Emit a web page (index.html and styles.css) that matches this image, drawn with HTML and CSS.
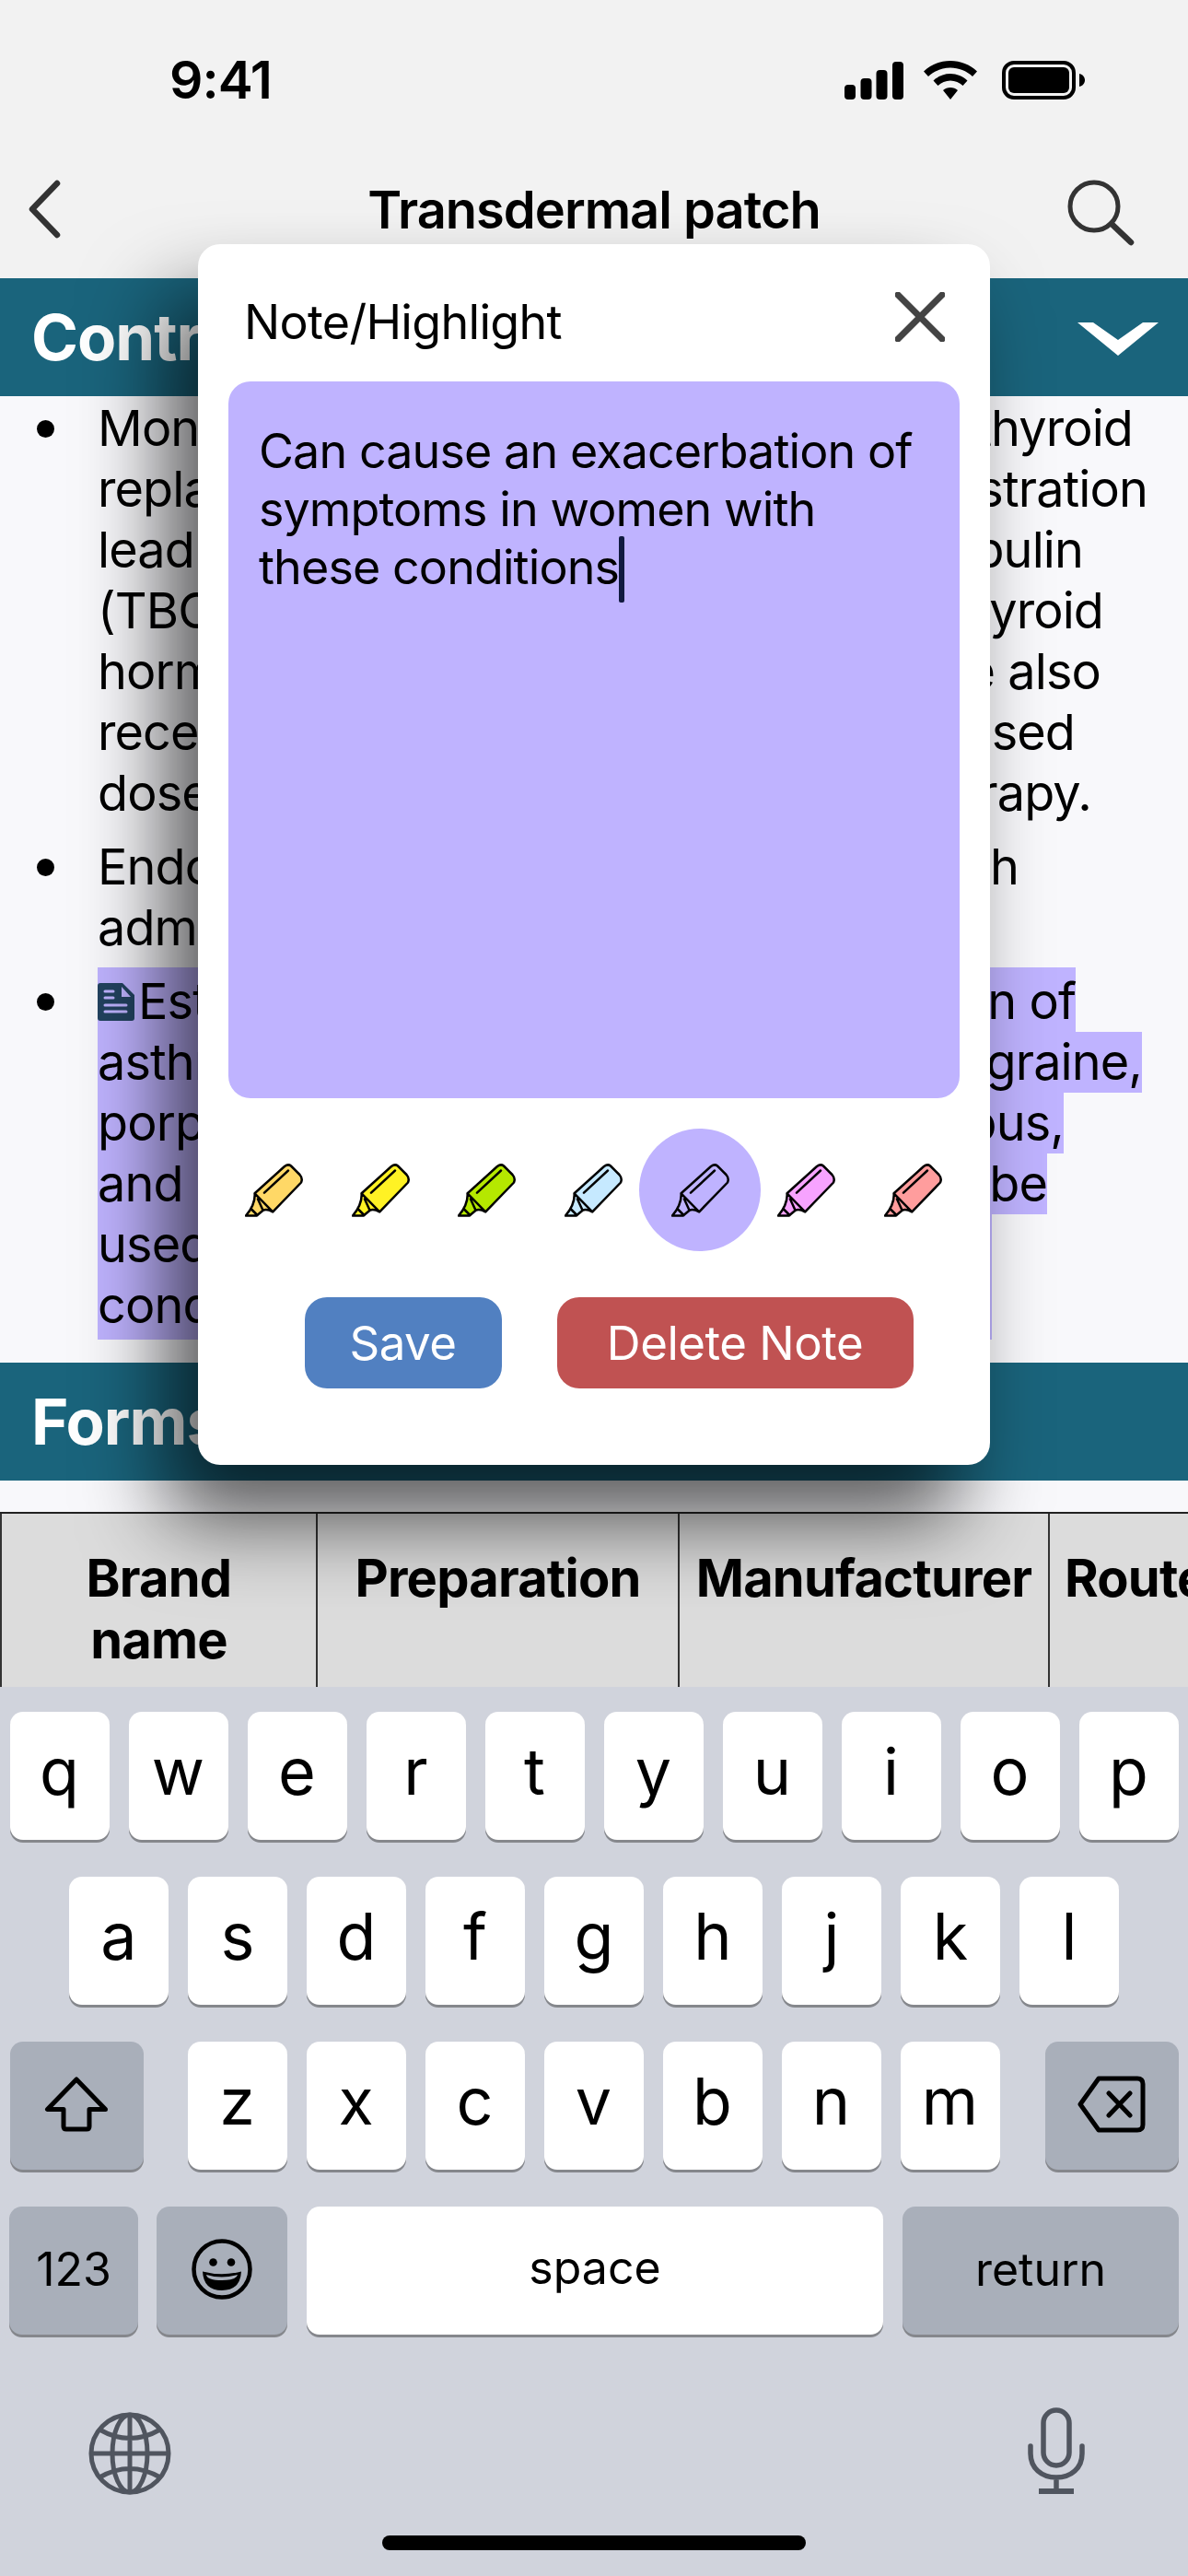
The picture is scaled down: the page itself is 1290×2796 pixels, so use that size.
FILE: index.html
```html
<!DOCTYPE html>
<html lang="en">
<head>
    <meta charset="UTF-8">
    <meta name="viewport" content="width=device-width, initial-scale=1.0">
    <title>Transdermal patch</title>
    <link rel="stylesheet" href="styles.css">
</head>
<body>
    <svg class="defs" width="0" height="0">
        <symbol id="pen" viewBox="0 0 64 58">
            <path class="pen-fill" d="M10.6 32.3 42 2.5Q46 -1 50 2L60 12Q63.5 16 61.5 20L30.2 52.3Q24 49 19.6 50.7L12.7 56.7H1Q10.6 45 10.6 32.3Z" transform="translate(0 0)"/>
            <path class="pen-line" d="M10.6 32.3 43 3Q47 0 50 2.5L59.5 12Q63 16 61 20.5L30.2 52.3 10.6 32.3Q11.5 44 1 56.5H12.7L19.6 50.7Q24 49 30.2 52.3M21 31.7 47 7.5M7 49.5 13.5 56M14 38.5 19.6 50.7"/>
        </symbol>
    </svg>

    <div class="status-bar">
        <span class="time">9:41</span>
        <div class="status-icons">
            <svg width="64" height="42" viewBox="0 0 64 42"><rect x="0" y="26" width="12" height="16" rx="4"/><rect x="17.500" y="19" width="12" height="23" rx="4"/><rect x="34.500" y="10" width="12" height="32" rx="4"/><rect x="52" y="1" width="12" height="41" rx="4"/></svg>
            <svg width="58" height="42" viewBox="0 0 58 42"><path d="M29 0C18 0 8 4 0 11.500L5 17C11.500 11 20 7.500 29 7.500S46.500 11 53 17L58 11.500C50 4 40 0 29 0ZM29 14C22 14 15.500 16.800 10.500 21.500L15.500 27C19 23.600 24 21.500 29 21.500S39 23.600 42.500 27L47.500 21.500C42.500 16.800 36 14 29 14ZM29 29C26 29 23 30.200 21 32L29 42 37 32C35 30.200 32 29 29 29Z"/></svg>
            <svg class="battery" width="90" height="42" viewBox="0 0 90 42"><rect x="2" y="2" width="76" height="38" rx="11" fill="none" stroke="#000" stroke-width="4"/><rect x="7" y="7" width="66" height="28" rx="6"/><path d="M84 14C88 15 90 18 90 21S88 27 84 28Z"/></svg>
        </div>
    </div>

    <div class="nav-bar">
        <svg class="nav-back" width="36" height="64" viewBox="0 0 36 64"><path d="M32 4 5 32 32 60" fill="none" stroke="#333" stroke-width="6.500" stroke-linecap="round" stroke-linejoin="round"/></svg>
        <span class="nav-title">Transdermal patch</span>
        <svg class="nav-search" width="74" height="72" viewBox="0 0 74 72"><circle cx="30" cy="29" r="26" fill="none" stroke="#333" stroke-width="5"/><path d="M49 48 70 68" stroke="#333" stroke-width="6.500" stroke-linecap="round"/></svg>
    </div>

    <div class="section-bar">
        <span>Contraindications</span>
        <svg class="chevron" width="88" height="40" viewBox="0 0 88 40"><path d="M0 3H17L44 22 71 3H88L44 39Z" fill="#fff"/></svg>
    </div>

    <ul class="notes">
        <li>
            <div class="ln end-1230"><span>Monitor</span><span>thyroid</span></div>
            <div class="ln end-1246"><span>replacement</span><span>administration</span></div>
            <div class="ln end-1176"><span>lead to</span><span>globulin</span></div>
            <div class="ln end-1198"><span>(TBG)</span><span>thyroid</span></div>
            <div class="ln end-1195"><span>hormone</span><span>be also</span></div>
            <div class="ln end-1167"><span>receive</span><span>increased</span></div>
            <div class="ln end-1185"><span>doses</span><span>therapy.</span></div>
        </li>
        <li>
            <div class="ln end-1106"><span>Endometrial</span><span>with</span></div>
            <div class="ln"><span>administration</span></div>
        </li>
        <li class="marked">
            <div class="ln end-1168 first"><span class="with-note"><svg class="note-icon" width="40" height="41" viewBox="0 0 40 41"><path d="M3 0H27L40 13V38Q40 41 37 41H3Q0 41 0 38V3Q0 0 3 0Z" fill="#22425f"/><path d="M26 4 36 15H26Z" fill="#bfb3ff"/><path d="M8 9H17M8 16H17M8 24H31M8 31H31" stroke="#bfb3ff" stroke-width="3" stroke-linecap="round"/></svg>Estrogens</span><span>function of</span></div>
            <div class="ln end-1240"><span>asthma</span><span>migraine,</span></div>
            <div class="ln end-1155"><span>porphyria</span><span>lupus,</span></div>
            <div class="ln end-1137"><span>and</span><span>be</span></div>
            <div class="ln end-1077"><span>used</span></div>
            <div class="ln end-1077 last"><span>conditions</span></div>
        </li>
    </ul>

    <div class="section-bar">
        <span>Forms</span>
    </div>
    <div class="spacer"></div>

    <div class="table-wrap">
        <table>
            <tr>
                <th class="col-brand">Brand name</th>
                <th class="col-prep">Preparation</th>
                <th class="col-manu">Manufacturer</th>
                <th class="col-route">Route</th>
            </tr>
        </table>
    </div>

    <div class="keyboard">
        <div class="key-row">
            <div class="key">q</div><div class="key">w</div><div class="key">e</div><div class="key">r</div><div class="key">t</div><div class="key">y</div><div class="key">u</div><div class="key">i</div><div class="key">o</div><div class="key">p</div>
        </div>
        <div class="key-row">
            <div class="key">a</div><div class="key">s</div><div class="key">d</div><div class="key">f</div><div class="key">g</div><div class="key">h</div><div class="key">j</div><div class="key">k</div><div class="key">l</div>
        </div>
        <div class="key-row wide-ends">
            <div class="key dark shift">
                <svg width="70" height="60" viewBox="0 0 70 60"><path d="M35 3 3.500 35.500H21V54Q21 57 24 57H46Q49 57 49 54V35.500H66.500Z" fill="none" stroke="#000" stroke-width="5" stroke-linejoin="round"/></svg>
            </div>
            <div class="key">z</div><div class="key">x</div><div class="key">c</div><div class="key">v</div><div class="key">b</div><div class="key">n</div><div class="key">m</div>
            <div class="key dark shift">
                <svg width="74" height="62" viewBox="0 0 74 62"><path d="M23 3H65Q71 3 71 9V53Q71 59 65 59H23L3 31Z" fill="none" stroke="#000" stroke-width="5" stroke-linejoin="round"/><path d="M34 19 57 43M57 19 34 43" stroke="#000" stroke-width="5" stroke-linecap="round"/></svg>
            </div>
        </div>
        <div class="key-row bottom-row">
            <div class="key dark num">123</div>
            <div class="key dark emoji">
                <svg width="66" height="66" viewBox="0 0 66 66"><circle cx="33" cy="33" r="30.500" fill="none" stroke="#000" stroke-width="4.500"/><circle cx="23.500" cy="25.500" r="4.300"/><circle cx="43" cy="25.500" r="4.300"/><path d="M12 35.500Q33 41 54 35.500Q53 56 33 56T12 35.500Z"/><path d="M16 39Q33 44 50 39Q49 45 33 45T16 39Z" fill="#a9afba"/></svg>
            </div>
            <div class="key space">space</div>
            <div class="key dark return">return</div>
        </div>
        <div class="kb-tools">
            <svg width="90" height="90" viewBox="0 0 90 90" fill="none" stroke="#50555f" stroke-width="5"><circle cx="45" cy="45" r="42"/><ellipse cx="45" cy="45" rx="19" ry="42"/><path d="M45 3V87M3 45H87M12 19Q45 38 78 19M12 71Q45 52 78 71"/></svg>
            <svg class="mic" width="62" height="94" viewBox="0 0 62 94" fill="none" stroke="#50555f" stroke-width="5.500"><rect x="17" y="3" width="28" height="60" rx="14"/><path d="M3 42V50C3 66 15 76 31 76S59 66 59 50V42M31 76V91" stroke-linecap="round"/><path d="M12 91H50" stroke-width="6"/></svg>
        </div>
        <div class="home-bar"></div>
    </div>

    <div class="modal">
        <div class="modal-head">
            <span>Note/Highlight</span>
            <svg width="54" height="54" viewBox="0 0 54 54"><path d="M3 3 51 51M51 3 3 51" stroke="#444" stroke-width="7" stroke-linecap="round"/></svg>
        </div>
        <div class="note-box">Can cause an exacerbation of symptoms in women with these conditions<span class="caret"></span></div>
        <div class="pens">
            <div class="pen orange"><svg width="64" height="58"><use href="#pen"/></svg></div>
            <div class="pen yellow"><svg width="64" height="58"><use href="#pen"/></svg></div>
            <div class="pen green"><svg width="64" height="58"><use href="#pen"/></svg></div>
            <div class="pen blue"><svg width="64" height="58"><use href="#pen"/></svg></div>
            <div class="pen violet active"><svg width="64" height="58"><use href="#pen"/></svg></div>
            <div class="pen pink"><svg width="64" height="58"><use href="#pen"/></svg></div>
            <div class="pen red"><svg width="64" height="58"><use href="#pen"/></svg></div>
        </div>
        <div class="modal-actions">
            <button class="save-button">Save</button>
            <button class="delete-button">Delete Note</button>
        </div>
    </div>
</body>
</html>
```

FILE: styles.css
```css
body {
    margin: 0;
    width: 1290px;
    height: 2796px;
    overflow: hidden;
    position: relative;
    display: flex;
    flex-direction: column;
    background-color: #f8f8fb;
    color: #000;
    font-family: Inter, "Liberation Sans", sans-serif;
}
.defs {
    position: absolute;
}
.status-bar {
    height: 174px;
    box-sizing: border-box;
    background-color: #f2f2f2;
    display: flex;
    justify-content: space-between;
    padding: 66px 112px 0 184px;
}
.time {
    font-size: 57px;
    font-weight: 600;
    line-height: 42px;
    letter-spacing: -1px;
}
.status-icons {
    display: flex;
    align-items: flex-start;
    gap: 22px;
}
.battery {
    margin-left: 5px;
}
.nav-bar {
    height: 128px;
    box-sizing: border-box;
    background-color: #f2f2f2;
    display: grid;
    grid-template-columns: 1fr auto 1fr;
    align-items: start;
    padding: 21px 30px 0;
}
.nav-search {
    justify-self: end;
    margin-right: 28px;
}
.nav-title {
    font-size: 56px;
    font-weight: 600;
    line-height: 66px;
    letter-spacing: -1px;
}
.section-bar {
    height: 128px;
    flex-shrink: 0;
    box-sizing: border-box;
    background-color: #1a647c;
    color: white;
    display: flex;
    justify-content: space-between;
    align-items: center;
    padding: 0 32px 0 34px;
    font-size: 69px;
    font-weight: 700;
    letter-spacing: -1px;
}
.chevron {
    margin-top: 2px;
}
.notes {
    height: 1049px;
    flex-shrink: 0;
    box-sizing: border-box;
    margin: 0;
    padding: 2px 0 0 106px;
    list-style: none;
    font-size: 54px;
    line-height: 66px;
    letter-spacing: -0.9px;
}
.notes li {
    position: relative;
    margin-bottom: 14px;
}
.notes li.marked {
    margin-top: -4px;
}
.notes li::before {
    content: "";
    position: absolute;
    left: -66px;
    top: 24px;
    width: 19px;
    height: 19px;
    border-radius: 50%;
    background: #000;
}
.notes li.marked::before {
    top: 28px;
}
.ln {
    display: flex;
    justify-content: space-between;
    white-space: nowrap;
}
.marked .ln {
    background-color: #bfb3ff;
}
.marked .first {
    padding-top: 4px;
}
.marked .last {
    padding-bottom: 4px;
}
.with-note {
    display: inline-flex;
    align-items: center;
}
.note-icon {
    margin-right: 4px;
}
.end-1230 { margin-right: 60px; }
.end-1246 { margin-right: 44px; }
.end-1176 { margin-right: 114px; }
.end-1198 { margin-right: 92px; }
.end-1195 { margin-right: 95px; }
.end-1167 { margin-right: 123px; }
.end-1185 { margin-right: 105px; }
.end-1106 { margin-right: 184px; }
.end-1168 { margin-right: 122px; }
.end-1240 { margin-right: 50px; }
.end-1155 { margin-right: 135px; }
.end-1137 { margin-right: 153px; }
.end-1077 { margin-right: 213px; }
.spacer {
    height: 34px;
    flex-shrink: 0;
}
.table-wrap {
    height: 190px;
    flex-shrink: 0;
    overflow: hidden;
}
table {
    width: 1500px;
    table-layout: fixed;
    border-collapse: collapse;
    background-color: #dcdcdc;
}
th {
    height: 190px;
    box-sizing: border-box;
    padding: 37px 0 0 0;
    vertical-align: top;
    border-left: 2px solid #333;
    border-top: 2px solid #222;
    font-size: 56px;
    font-weight: 700;
    line-height: 67px;
    letter-spacing: -0.8px;
}
.col-brand { width: 343px; padding-left: 80px; padding-right: 80px; }
.col-prep { width: 393px; }
.col-manu { width: 402px; }
.col-route { text-align: left; padding-left: 16px; }
.keyboard {
    flex: 1;
    background-color: #d0d3dc;
    padding: 27px 10px 0;
    position: relative;
}
.key-row {
    display: flex;
    justify-content: center;
    gap: 21px;
    margin-bottom: 40px;
}
.key {
    width: 108px;
    height: 129px;
    padding-bottom: 10px;
    flex-shrink: 0;
    background: white;
    border-radius: 14px;
    box-shadow: 0 3px 0 #85878c;
    display: flex;
    align-items: center;
    justify-content: center;
    font-size: 70px;
}
.key.dark {
    background: #a9afba;
}
.shift, .num, .emoji, .return {
    height: 136px;
    padding-bottom: 3px;
}
.space {
    height: 131px;
    padding-bottom: 8px;
}
.shift {
    width: 145px;
}
.wide-ends .shift:first-child {
    margin-right: 27px;
}
.wide-ends .shift:last-child {
    margin-left: 28px;
}
.num, .space, .return {
    font-size: 50px;
}
.key-row.bottom-row {
    margin-bottom: 0;
}
.num {
    width: 140px;
    margin-right: -1px;
}
.emoji {
    width: 142px;
}
.space {
    width: 626px;
}
.return {
    width: 300px;
}
.kb-tools {
    display: flex;
    justify-content: space-between;
    align-items: flex-start;
    padding: 84px 102px 0 86px;
}
.mic {
    margin-top: -5px;
}
.home-bar {
    position: absolute;
    left: 415px;
    top: 921px;
    width: 460px;
    height: 16px;
    border-radius: 8px;
    background: #000;
}
.modal {
    position: absolute;
    left: 215px;
    top: 265px;
    width: 860px;
    height: 1325px;
    box-sizing: border-box;
    padding: 0 33px;
    background: white;
    border-radius: 24px;
    box-shadow: -35px 60px 90px rgba(0, 0, 0, 0.65);
}
.modal-head {
    height: 149px;
    box-sizing: border-box;
    display: flex;
    justify-content: space-between;
    align-items: flex-start;
    padding: 52px 16px 0 17px;
    font-size: 52px;
    line-height: 66px;
    letter-spacing: -0.7px;
}
.note-box {
    height: 778px;
    box-sizing: border-box;
    padding: 44px 33px;
    background-color: #bfb3ff;
    border-radius: 24px;
    font-size: 52px;
    line-height: 63px;
    letter-spacing: -0.9px;
}
.caret {
    display: inline-block;
    width: 6px;
    height: 72px;
    margin: -30px 0 -10px;
    vertical-align: -10px;
    border-radius: 2px;
    background: #111a40;
}
.pens {
    display: flex;
    margin: 33px 0 0 -8px;
    height: 133px;
}
.pen {
    width: 115.7px;
    flex-shrink: 0;
    display: flex;
    align-items: center;
    justify-content: center;
    position: relative;
}
.pen svg {
    position: relative;
}
.pen.active::before {
    content: "";
    position: absolute;
    left: -8.300px;
    width: 132px;
    height: 133px;
    border-radius: 50%;
    background: #bfb3ff;
}
.pen-fill {
    fill: var(--pen);
}
.pen-line {
    fill: none;
    stroke: #000;
    stroke-width: 2.500;
    stroke-linejoin: round;
    stroke-linecap: round;
}
.orange { --pen: #ffd866; }
.yellow { --pen: #fff224; }
.green { --pen: #b5e800; }
.blue { --pen: #c6e9ff; }
.violet { --pen: #bfb3ff; }
.pink { --pen: #f7a3ff; }
.red { --pen: #ff9d9d; }
.modal-actions {
    display: flex;
    justify-content: center;
    gap: 60px;
    margin-top: 50px;
    padding-left: 32px;
}
.modal-actions button {
    height: 99px;
    border: none;
    border-radius: 24px;
    color: white;
    font-family: inherit;
    font-size: 51px;
    letter-spacing: -0.5px;
}
.save-button {
    width: 214px;
    background-color: #5180c1;
}
.delete-button {
    width: 387px;
    background-color: #c05252;
}
```
